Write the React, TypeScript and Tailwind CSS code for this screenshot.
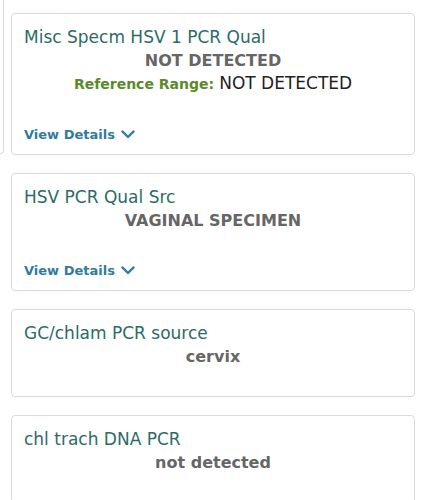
import React from "react";

type Result = {
  name: string;
  value: string;
  range?: string;
  details?: boolean;
};

const results: Result[] = [
  { name: "Misc Specm HSV 1 PCR Qual", value: "NOT DETECTED", range: "NOT DETECTED", details: true },
  { name: "HSV PCR Qual Src", value: "VAGINAL SPECIMEN", details: true },
  { name: "GC/chlam PCR source", value: "cervix" },
  { name: "chl trach DNA PCR", value: "not detected" },
];

const Chevron = () => (
  <svg width="14" height="9" viewBox="0 0 14 9" fill="none">
    <path d="M1.5 1.5L7 7l5.5-5.5" stroke="currentColor" strokeWidth="2.4" strokeLinecap="round" strokeLinejoin="round" />
  </svg>
);

const ResultCard = ({ item }: { item: Result }) => (
  <div
    className={`rounded-[4px] border border-[#dadada] bg-white px-3 pt-3 ${
      item.details ? "pb-2" : "pb-7"
    }`}
  >
    <p className="text-[17px] leading-[23px] text-[#2c6b66]">{item.name}</p>
    <p className="text-center text-[16px] font-bold leading-[23px] text-[#666666]">
      {item.value}
    </p>
    {item.range && (
      <p className="text-center leading-[23px]">
        <span className="text-[14px] font-semibold text-[#5a8a29]">Reference Range:</span>{" "}
        <span className="text-[17px] text-[#222222]">{item.range}</span>
      </p>
    )}
    {item.details && (
      <button
        type="button"
        className="mt-[27px] flex h-[23px] items-center gap-[6px] text-[13px] font-semibold text-[#2f7c9c]"
      >
        View Details
        <Chevron />
      </button>
    )}
  </div>
);

export default function App() {
  return (
    <div
      className="flex min-h-[500px] items-start bg-white"
      style={{ fontFamily: '"DejaVu Sans", sans-serif' }}
    >
      {/* edge of the previous card */}
      <div className="h-[154px] w-[4px] shrink-0 rounded-br-[4px] border-r border-b border-[#dadada]" />
      <div className="ml-[7px] mr-[10px] flex flex-1 flex-col gap-[18px] pt-[13px]">
        {results.map((r) => (
          <ResultCard key={r.name} item={r} />
        ))}
      </div>
    </div>
  );
}
